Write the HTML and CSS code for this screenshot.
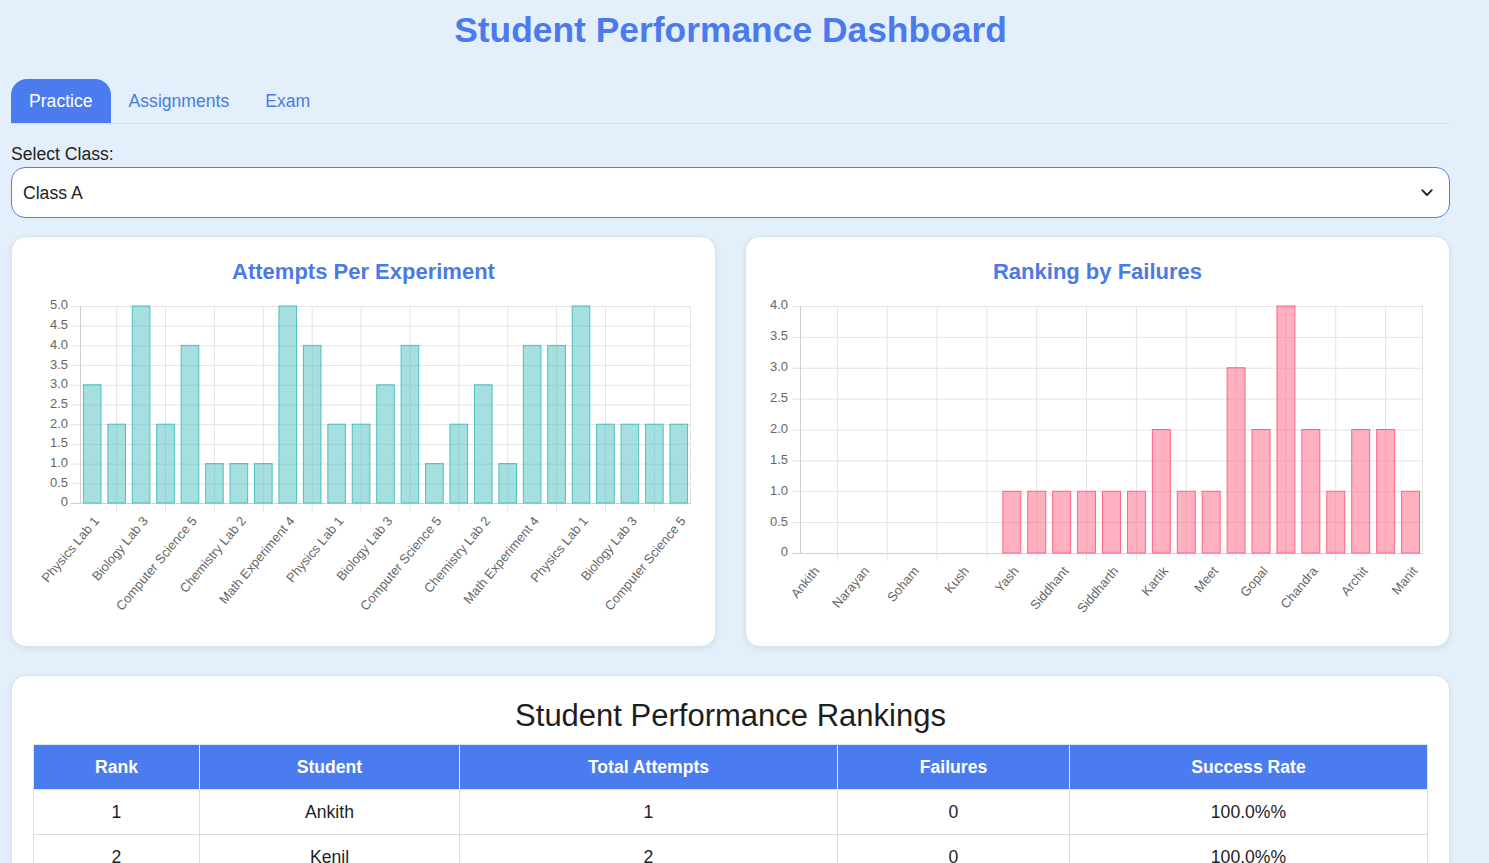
FILE: index.html
```html
<!DOCTYPE html>
<html lang="en">
<head>
<meta charset="utf-8">
<title>Student Performance Dashboard</title>
<link rel="stylesheet" href="styles.css">
</head>
<body>
<div class="dashboard">
  <h1 class="page-title">Student Performance Dashboard</h1>

  <nav class="tabs">
    <button class="tab active">Practice</button>
    <button class="tab">Assignments</button>
    <button class="tab">Exam</button>
  </nav>

  <label class="field-label" for="classSelect">Select Class:</label>
  <div class="select-wrap">
    <select id="classSelect" class="class-select">
      <option>Class A</option>
      <option>Class B</option>
      <option>Class C</option>
    </select>
    <svg class="chevron" width="12" height="8" viewBox="0 0 12 8"><path d="M1.2 1.2 L6 6 L10.8 1.2" fill="none" stroke="#222" stroke-width="1.8" stroke-linecap="round" stroke-linejoin="round"/></svg>
  </div>

  <section class="charts">
    <div class="card chart-card">
      <h3 class="chart-title">Attempts Per Experiment</h3>
      <svg class="chart" width="665" height="341" viewBox="0 0 665 341" font-family="Liberation Sans, Arial, sans-serif" font-size="13">
        <g stroke="#e3e3e3" stroke-width="1">
          <line x1="40" y1="217.5" x2="660" y2="217.5" stroke="#cfcfcf"/>
          <line x1="40" y1="197.8" x2="660" y2="197.8"/>
          <line x1="40" y1="178.1" x2="660" y2="178.1"/>
          <line x1="40" y1="158.4" x2="660" y2="158.4"/>
          <line x1="40" y1="138.7" x2="660" y2="138.7"/>
          <line x1="40" y1="119" x2="660" y2="119"/>
          <line x1="40" y1="99.3" x2="660" y2="99.3"/>
          <line x1="40" y1="79.6" x2="660" y2="79.6"/>
          <line x1="40" y1="59.9" x2="660" y2="59.9"/>
          <line x1="40" y1="40.2" x2="660" y2="40.2"/>
          <line x1="40" y1="20.5" x2="660" y2="20.5"/>
          <line x1="49.5" y1="20" x2="49.5" y2="217" stroke="#cfcfcf"/>
          <line x1="85.66" y1="20" x2="85.66" y2="225"/>
          <line x1="134.54" y1="20" x2="134.54" y2="225"/>
          <line x1="183.42" y1="20" x2="183.42" y2="225"/>
          <line x1="232.3" y1="20" x2="232.3" y2="225"/>
          <line x1="281.18" y1="20" x2="281.18" y2="225"/>
          <line x1="330.06" y1="20" x2="330.06" y2="225"/>
          <line x1="378.94" y1="20" x2="378.94" y2="225"/>
          <line x1="427.82" y1="20" x2="427.82" y2="225"/>
          <line x1="476.7" y1="20" x2="476.7" y2="225"/>
          <line x1="525.58" y1="20" x2="525.58" y2="225"/>
          <line x1="574.46" y1="20" x2="574.46" y2="225"/>
          <line x1="623.34" y1="20" x2="623.34" y2="225"/>
          <line x1="659.5" y1="20" x2="659.5" y2="217"/>
        </g>
        <g fill="#666" text-anchor="end" dominant-baseline="middle">
          <text x="37" y="217">0</text>
          <text x="37" y="197.3">0.5</text>
          <text x="37" y="177.6">1.0</text>
          <text x="37" y="157.9">1.5</text>
          <text x="37" y="138.2">2.0</text>
          <text x="37" y="118.5">2.5</text>
          <text x="37" y="98.8">3.0</text>
          <text x="37" y="79.1">3.5</text>
          <text x="37" y="59.4">4.0</text>
          <text x="37" y="39.7">4.5</text>
          <text x="37" y="20">5.0</text>
        </g>
        <g fill="rgba(75,192,192,0.5)" stroke="rgb(75,192,192)" stroke-width="1">
          <rect x="52.42" y="98.8" width="17.6" height="118.2"/>
          <rect x="76.86" y="138.2" width="17.6" height="78.8"/>
          <rect x="101.3" y="20" width="17.6" height="197"/>
          <rect x="125.74" y="138.2" width="17.6" height="78.8"/>
          <rect x="150.18" y="59.4" width="17.6" height="157.6"/>
          <rect x="174.62" y="177.6" width="17.6" height="39.4"/>
          <rect x="199.06" y="177.6" width="17.6" height="39.4"/>
          <rect x="223.5" y="177.6" width="17.6" height="39.4"/>
          <rect x="247.94" y="20" width="17.6" height="197"/>
          <rect x="272.38" y="59.4" width="17.6" height="157.6"/>
          <rect x="296.82" y="138.2" width="17.6" height="78.8"/>
          <rect x="321.26" y="138.2" width="17.6" height="78.8"/>
          <rect x="345.7" y="98.8" width="17.6" height="118.2"/>
          <rect x="370.14" y="59.4" width="17.6" height="157.6"/>
          <rect x="394.58" y="177.6" width="17.6" height="39.4"/>
          <rect x="419.02" y="138.2" width="17.6" height="78.8"/>
          <rect x="443.46" y="98.8" width="17.6" height="118.2"/>
          <rect x="467.9" y="177.6" width="17.6" height="39.4"/>
          <rect x="492.34" y="59.4" width="17.6" height="157.6"/>
          <rect x="516.78" y="59.4" width="17.6" height="157.6"/>
          <rect x="541.22" y="20" width="17.6" height="197"/>
          <rect x="565.66" y="138.2" width="17.6" height="78.8"/>
          <rect x="590.1" y="138.2" width="17.6" height="78.8"/>
          <rect x="614.54" y="138.2" width="17.6" height="78.8"/>
          <rect x="638.98" y="138.2" width="17.6" height="78.8"/>
        </g>
        <g fill="#666" text-anchor="end" dominant-baseline="middle">
          <text x="66.2" y="233" transform="rotate(-50 66.2 233)">Physics Lab 1</text>
          <text x="115.1" y="233" transform="rotate(-50 115.1 233)">Biology Lab 3</text>
          <text x="164" y="233" transform="rotate(-50 164 233)">Computer Science 5</text>
          <text x="212.9" y="233" transform="rotate(-50 212.9 233)">Chemistry Lab 2</text>
          <text x="261.7" y="233" transform="rotate(-50 261.7 233)">Math Experiment 4</text>
          <text x="310.6" y="233" transform="rotate(-50 310.6 233)">Physics Lab 1</text>
          <text x="359.5" y="233" transform="rotate(-50 359.5 233)">Biology Lab 3</text>
          <text x="408.4" y="233" transform="rotate(-50 408.4 233)">Computer Science 5</text>
          <text x="457.3" y="233" transform="rotate(-50 457.3 233)">Chemistry Lab 2</text>
          <text x="506.1" y="233" transform="rotate(-50 506.1 233)">Math Experiment 4</text>
          <text x="555" y="233" transform="rotate(-50 555 233)">Physics Lab 1</text>
          <text x="603.9" y="233" transform="rotate(-50 603.9 233)">Biology Lab 3</text>
          <text x="652.8" y="233" transform="rotate(-50 652.8 233)">Computer Science 5</text>
        </g>
      </svg>
    </div>

    <div class="card chart-card">
      <h3 class="chart-title">Ranking by Failures</h3>
      <svg class="chart" width="665" height="341" viewBox="0 0 665 341" font-family="Liberation Sans, Arial, sans-serif" font-size="13">
        <g stroke="#e3e3e3" stroke-width="1">
          <line x1="27" y1="267.5" x2="658" y2="267.5" stroke="#cfcfcf"/>
          <line x1="27" y1="236.6" x2="658" y2="236.6"/>
          <line x1="27" y1="205.75" x2="658" y2="205.75"/>
          <line x1="27" y1="174.9" x2="658" y2="174.9"/>
          <line x1="27" y1="144" x2="658" y2="144"/>
          <line x1="27" y1="113.1" x2="658" y2="113.1"/>
          <line x1="27" y1="82.25" x2="658" y2="82.25"/>
          <line x1="27" y1="51.4" x2="658" y2="51.4"/>
          <line x1="27" y1="20.5" x2="658" y2="20.5"/>
          <line x1="35.5" y1="20" x2="35.5" y2="267" stroke="#cfcfcf"/>
          <line x1="72.38" y1="20" x2="72.38" y2="275"/>
          <line x1="122.22" y1="20" x2="122.22" y2="275"/>
          <line x1="172.06" y1="20" x2="172.06" y2="275"/>
          <line x1="221.9" y1="20" x2="221.9" y2="275"/>
          <line x1="271.74" y1="20" x2="271.74" y2="275"/>
          <line x1="321.58" y1="20" x2="321.58" y2="275"/>
          <line x1="371.42" y1="20" x2="371.42" y2="275"/>
          <line x1="421.26" y1="20" x2="421.26" y2="275"/>
          <line x1="471.1" y1="20" x2="471.1" y2="275"/>
          <line x1="520.94" y1="20" x2="520.94" y2="275"/>
          <line x1="570.78" y1="20" x2="570.78" y2="275"/>
          <line x1="620.62" y1="20" x2="620.62" y2="275"/>
          <line x1="657.5" y1="20" x2="657.5" y2="267"/>
        </g>
        <g fill="#666" text-anchor="end" dominant-baseline="middle">
          <text x="23" y="267">0</text>
          <text x="23" y="236.1">0.5</text>
          <text x="23" y="205.25">1.0</text>
          <text x="23" y="174.4">1.5</text>
          <text x="23" y="143.5">2.0</text>
          <text x="23" y="112.6">2.5</text>
          <text x="23" y="81.75">3.0</text>
          <text x="23" y="50.9">3.5</text>
          <text x="23" y="20">4.0</text>
        </g>
        <g fill="rgba(255,99,132,0.5)" stroke="rgb(255,99,132)" stroke-width="1">
          <rect x="237.85" y="205.25" width="17.94" height="61.75"/>
          <rect x="262.77" y="205.25" width="17.94" height="61.75"/>
          <rect x="287.69" y="205.25" width="17.94" height="61.75"/>
          <rect x="312.61" y="205.25" width="17.94" height="61.75"/>
          <rect x="337.53" y="205.25" width="17.94" height="61.75"/>
          <rect x="362.45" y="205.25" width="17.94" height="61.75"/>
          <rect x="387.37" y="143.5" width="17.94" height="123.5"/>
          <rect x="412.29" y="205.25" width="17.94" height="61.75"/>
          <rect x="437.21" y="205.25" width="17.94" height="61.75"/>
          <rect x="462.13" y="81.75" width="17.94" height="185.25"/>
          <rect x="487.05" y="143.5" width="17.94" height="123.5"/>
          <rect x="511.97" y="20" width="17.94" height="247"/>
          <rect x="536.89" y="143.5" width="17.94" height="123.5"/>
          <rect x="561.81" y="205.25" width="17.94" height="61.75"/>
          <rect x="586.73" y="143.5" width="17.94" height="123.5"/>
          <rect x="611.65" y="143.5" width="17.94" height="123.5"/>
          <rect x="636.57" y="205.25" width="17.94" height="61.75"/>
        </g>
        <g fill="#666" text-anchor="end" dominant-baseline="middle">
          <text x="52.5" y="283" transform="rotate(-50 52.5 283)">Ankith</text>
          <text x="102.3" y="283" transform="rotate(-50 102.3 283)">Narayan</text>
          <text x="152.1" y="283" transform="rotate(-50 152.1 283)">Soham</text>
          <text x="202" y="283" transform="rotate(-50 202 283)">Kush</text>
          <text x="251.8" y="283" transform="rotate(-50 251.8 283)">Yash</text>
          <text x="301.7" y="283" transform="rotate(-50 301.7 283)">Siddhant</text>
          <text x="351.5" y="283" transform="rotate(-50 351.5 283)">Siddharth</text>
          <text x="401.3" y="283" transform="rotate(-50 401.3 283)">Kartik</text>
          <text x="451.2" y="283" transform="rotate(-50 451.2 283)">Meet</text>
          <text x="501" y="283" transform="rotate(-50 501 283)">Gopal</text>
          <text x="550.9" y="283" transform="rotate(-50 550.9 283)">Chandra</text>
          <text x="600.7" y="283" transform="rotate(-50 600.7 283)">Archit</text>
          <text x="650.5" y="283" transform="rotate(-50 650.5 283)">Manit</text>
        </g>
      </svg>
    </div>
  </section>

  <section class="card table-card">
    <h2 class="table-title">Student Performance Rankings</h2>
    <table class="rank-table">
      <colgroup>
        <col class="c-rank"><col class="c-student"><col class="c-attempts"><col class="c-fail"><col class="c-rate">
      </colgroup>
      <thead>
        <tr><th>Rank</th><th>Student</th><th>Total Attempts</th><th>Failures</th><th>Success Rate</th></tr>
      </thead>
      <tbody>
        <tr><td>1</td><td>Ankith</td><td>1</td><td>0</td><td>100.0%%</td></tr>
        <tr><td>2</td><td>Kenil</td><td>2</td><td>0</td><td>100.0%%</td></tr>
        <tr><td>3</td><td>Narayan</td><td>2</td><td>0</td><td>100.0%%</td></tr>
        <tr><td>4</td><td>Soham</td><td>3</td><td>0</td><td>100.0%%</td></tr>
        <tr><td>5</td><td>Kush</td><td>3</td><td>0</td><td>100.0%%</td></tr>
      </tbody>
    </table>
  </section>
</div>
</body>
</html>
```

FILE: styles.css
```css
* { box-sizing: border-box; }

html, body {
  margin: 0;
  padding: 0;
  background: #e3f0fc;
  font-family: "Liberation Sans", Arial, sans-serif;
  color: #222;
}

.dashboard {
  width: 1439px;
  margin-left: 11px;
  padding-top: 10px;
}

.page-title {
  margin: 0;
  font-size: 35.4px;
  line-height: 40px;
  font-weight: bold;
  text-align: center;
  color: #4a7aed;
}

.tabs {
  display: flex;
  margin-top: 29px;
  border-bottom: 1px solid #d6e0ea;
}

.tab {
  font-family: inherit;
  font-size: 17.6px;
  line-height: 20px;
  padding: 12px 18px;
  border: none;
  background: transparent;
  color: #4a7be0;
  border-radius: 16px 16px 0 0;
  cursor: pointer;
}

.tab.active {
  background: #4a7cf0;
  color: #fff;
}

.field-label {
  display: block;
  margin-top: 20px;
  font-size: 17.6px;
  line-height: 20px;
  color: #222;
}

.select-wrap {
  position: relative;
  margin-top: 3px;
}

.class-select {
  display: block;
  width: 100%;
  height: 51px;
  padding: 0 40px 0 11px;
  font-family: inherit;
  font-size: 17.6px;
  color: #222;
  background: #fff;
  border: 1px solid #5b7fd3;
  border-radius: 14px;
  -webkit-appearance: none;
  appearance: none;
  outline: none;
}

.chevron {
  position: absolute;
  right: 17px;
  top: 22px;
  pointer-events: none;
}

.charts {
  display: grid;
  grid-template-columns: 705px 705px;
  gap: 29px;
  margin-top: 18px;
}

.card {
  background: #fff;
  border-radius: 15px;
  border: 1px solid #d9e3ec;
  box-shadow: 0 2px 6px rgba(0, 0, 0, 0.08);
}

.chart-card {
  height: 411px;
  padding: 20px 19px 18px 19px;
}

.chart-title {
  margin: 0;
  font-size: 22px;
  line-height: 29px;
  font-weight: bold;
  text-align: center;
  color: #4a7ae6;
}

.chart {
  display: block;
}

.table-card {
  margin-top: 28px;
  padding: 22px 21px 20px 21px;
}

.table-title {
  margin: 0 0 10px 0;
  font-size: 31px;
  line-height: 36px;
  font-weight: normal;
  text-align: center;
  color: #1e1e1e;
}

.rank-table {
  width: 1394px;
  border-collapse: collapse;
  table-layout: fixed;
  font-size: 17.6px;
}

.c-rank { width: 166px; }
.c-student { width: 260px; }
.c-attempts { width: 378px; }
.c-fail { width: 232px; }
.c-rate { width: 358px; }

.rank-table th {
  background: #4a7cf0;
  color: #fff;
  font-weight: bold;
  height: 45px;
  border: 1px solid #dfe6f2;
  text-align: center;
}

.rank-table td {
  height: 45px;
  border: 1px solid #dddddd;
  text-align: center;
  color: #1e1e1e;
}
```
